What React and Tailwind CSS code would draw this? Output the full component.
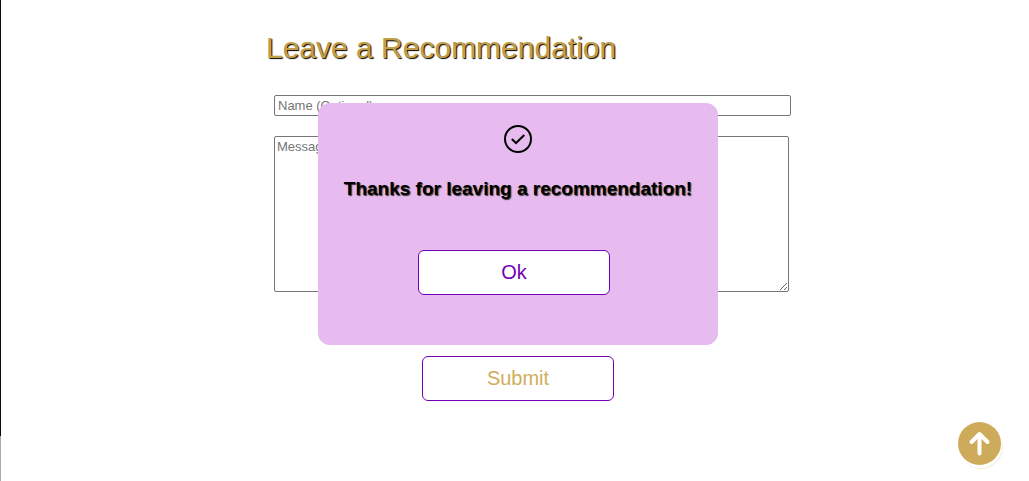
import React from "react";

function CheckCircle() {
  return (
    <svg className="h-7 w-7" viewBox="0 0 28 28" fill="none" stroke="black" strokeWidth="2" aria-hidden="true">
      <circle cx="14" cy="14" r="13" />
      <path d="M7.8 14 L12 18 L20.3 10" />
    </svg>
  );
}

function ArrowUp() {
  return (
    <svg
      className="h-[43px] w-[43px]"
      viewBox="0 0 43 43"
      fill="none"
      stroke="white"
      strokeWidth="4"
      strokeLinecap="round"
      strokeLinejoin="round"
      aria-hidden="true"
    >
      <path d="M21.5 31.5 V12.5 M13.5 20 L21.5 12 L29.5 20" />
    </svg>
  );
}

function SuccessDialog() {
  return (
    <div
      role="dialog"
      aria-labelledby="thanks"
      className="absolute top-[103px] left-1/2 flex w-[400px] -translate-x-1/2 flex-col items-center rounded-xl bg-[#e7bbef] pt-[22px] pb-[50px]"
    >
      <CheckCircle />
      <h2
        id="thanks"
        className="mt-6 mb-[49px] text-[19px] leading-6 font-bold whitespace-nowrap [text-shadow:1px_1px_1px_#333]"
      >
        Thanks for leaving a recommendation!
      </h2>
      <div className="pr-2">
        <button type="button" className="h-[45px] w-48 rounded-md border border-[#7300b5] bg-white pb-0.5 text-[20px] text-[#7300b5]">
          Ok
        </button>
      </div>
    </div>
  );
}

export default function App() {
  return (
    <div className="flex min-h-screen bg-white font-['Liberation_Sans',Arial,sans-serif] text-black">
      <div className="flex w-px shrink-0 flex-col">
        <div className="flex-1 bg-[#080a0f]" />
        <div className="h-[45px] bg-[#aaaaaa]" />
      </div>
      <main className="flex flex-1 justify-center pl-[6px]">
        <section className="relative w-[508px] pt-7">
          <h1 className="pl-0.5 text-[30px] leading-10 text-[#c29e48] [text-shadow:1px_1px_1px_black]">
            Leave a Recommendation
          </h1>
          <form className="mt-[27px] flex flex-col items-start pl-[10px]" onSubmit={(e) => e.preventDefault()}>
            <input
              type="text"
              aria-label="Name"
              placeholder="Name (Optional)"
              className="h-[21px] w-[517px] rounded-[2px] border border-[#767676] bg-white px-[3px] text-[13px] placeholder:text-[#757575]"
            />
            <textarea
              aria-label="Message"
              placeholder="Message"
              className="mt-5 h-[156px] w-[515px] rounded-[2px] border border-[#767676] bg-white px-[2px] py-[2px] text-[13px] leading-4 placeholder:text-[#757575]"
            />
            <button
              type="submit"
              className="mt-16 ml-[148px] h-[45px] w-48 rounded-md border border-[#7300b5] bg-white pb-0.5 text-[20px] text-[#cfad5b]"
            >
              Submit
            </button>
          </form>
          <SuccessDialog />
        </section>
      </main>
      <button
        type="button"
        aria-label="Back to top"
        className="fixed right-7 bottom-4 rounded-full bg-[#cdab5a] shadow-[1px_3px_0_white,2px_4px_1px_#f7efde]"
      >
        <ArrowUp />
      </button>
    </div>
  );
}
